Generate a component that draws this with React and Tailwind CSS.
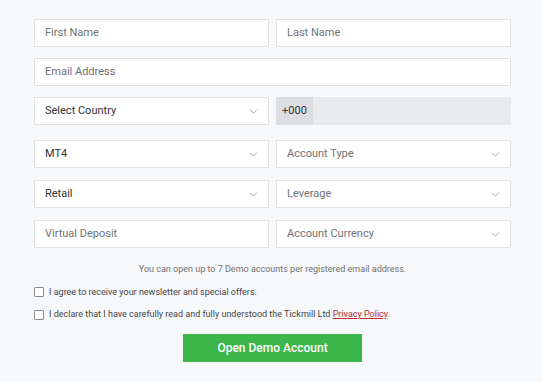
import { ChevronDown } from 'lucide-react'

const FONT = "font-['Roboto',_'Liberation_Sans',_sans-serif]"

function Field({ label, dark }) {
  return (
    <div className="h-[28px] bg-white border border-[#dfe1e4] flex items-center px-[10px]">
      <span className={`text-[11px] ${dark ? 'text-[#333]' : 'text-[#6f7275]'}`}>{label}</span>
    </div>
  )
}

function Select({ label, dark }) {
  return (
    <div className="h-[28px] bg-white border border-[#dfe1e4] flex items-center justify-between pl-[10px] pr-[8px]">
      <span className={`text-[11px] ${dark ? 'text-[#333]' : 'text-[#6f7275]'}`}>{label}</span>
      <ChevronDown size={13} strokeWidth={1.2} className="text-[#6f7275]" />
    </div>
  )
}

function Check({ children }) {
  return (
    <div className="flex items-center gap-[5px]">
      <div className="w-[10px] h-[10px] border border-[#8a8d90] rounded-[1px] bg-white" />
      <span className="text-[9px] text-[#444]">{children}</span>
    </div>
  )
}

export default function App() {
  return (
    <div className={`w-[542px] h-[382px] bg-[#f7f8fa] ${FONT}`}>
      <div className="ml-[34px] w-[477px] pt-[19px]">
        <div className="grid grid-cols-2 gap-x-[7px] gap-y-[11px]">
          <Field label="First Name" />
          <Field label="Last Name" />
          <div className="col-span-2">
            <Field label="Email Address" />
          </div>
          <Select label="Select Country" dark />
          <div className="h-[28px] bg-[#e8eaec] flex">
            <div className="w-[37px] bg-[#dcdee1] flex items-center justify-center text-[11px] text-[#333]">+000</div>
          </div>
        </div>
        <div className="grid grid-cols-2 gap-x-[7px] gap-y-[12px] mt-[15px]">
          <Select label="MT4" dark />
          <Select label="Account Type" />
          <Select label="Retail" dark />
          <Select label="Leverage" />
          <Field label="Virtual Deposit" />
          <Select label="Account Currency" />
        </div>
        <div className="text-center text-[9px] text-[#6f7275] mt-[15px]">
          You can open up to 7 Demo accounts per registered email address.
        </div>
        <div className="flex flex-col gap-[9px] mt-[9px]">
          <Check>I agree to receive your newsletter and special offers.</Check>
          <Check>
            I declare that I have carefully read and fully understood the Tickmill Ltd{' '}
            <span className="text-[#c62828] underline">Privacy Policy</span>.
          </Check>
        </div>
        <div className="flex justify-center mt-[12px]">
          <button className="w-[179px] h-[28px] bg-[#3cb54a] text-white text-[12px] font-medium">
            Open Demo Account
          </button>
        </div>
      </div>
    </div>
  )
}
